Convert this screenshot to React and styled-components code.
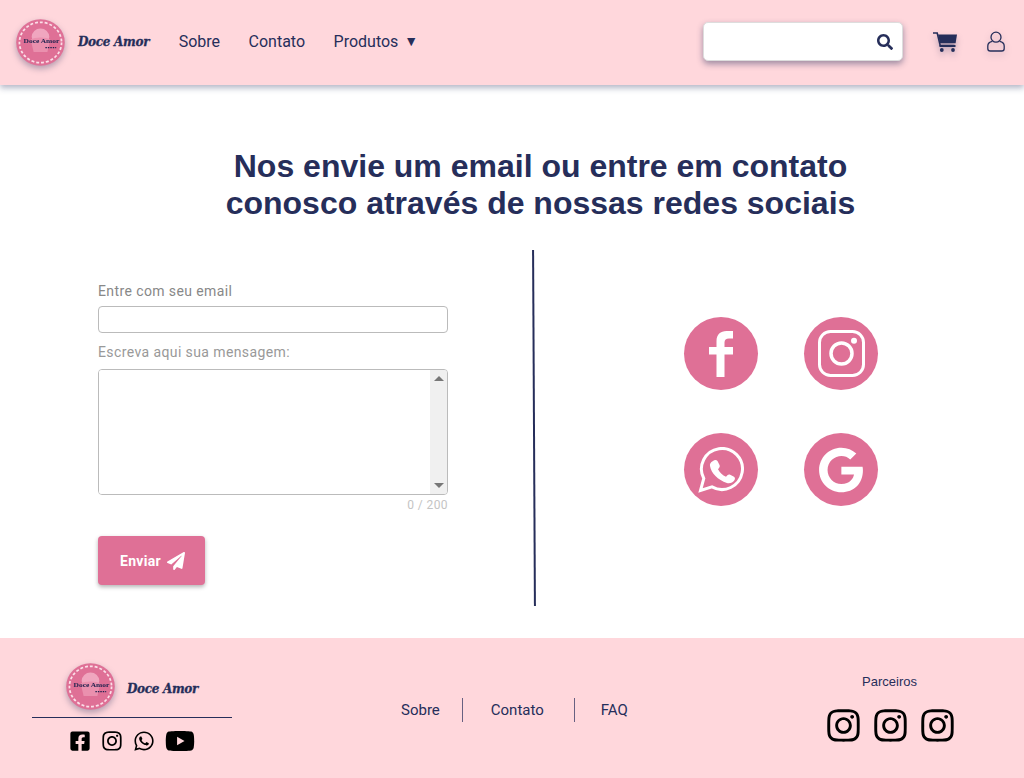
import React from 'react';
import styled, { createGlobalStyle } from 'styled-components';
import { FaSearch, FaPaperPlane, FaInstagram, FaWhatsapp, FaGoogle, FaFacebookSquare, FaYoutube } from 'react-icons/fa';

const navy = '#262e5a';
const rose = '#df7096';
const blush = '#ffd7dc';

const Logo = () => (
  <LogoSvg viewBox="0 0 50 50" width="49" height="47" preserveAspectRatio="none">
    <circle cx="25" cy="25" r="24.8" fill={rose} />
    <circle cx="25" cy="25" r="21.5" fill="none" stroke="#fbdfe8" strokeWidth="1.8" strokeDasharray="3 2" />
    <circle cx="25" cy="19" r="9" fill="#f0a6bf" />
    <path d="M15 22c3-3 17-3 20 0l-3 13H18z" fill="#ea90ae" />
    <text x="26" y="26" textAnchor="middle" fontFamily="Liberation Serif, serif" fontWeight="700" fontSize="7.6" fill="#20234f">
      Doce Amor
    </text>
    <path d="M30 30.5h11" stroke="#20234f" strokeWidth="1.2" strokeDasharray="1.5 1" />
  </LogoSvg>
);

const CartIcon = () => (
  <CartSvg viewBox="0 0 24 20" width="24" height="20">
    <path d="M0 1h4.2l3 12.5h14.3" fill="none" stroke={navy} strokeWidth="1.6" />
    <path d="M5 2.6h19l-1.4 8.6H7z" fill={navy} />
    <rect x="6.5" y="13" width="16" height="2" fill={navy} />
    <circle cx="8.8" cy="18" r="1.9" fill={navy} />
    <circle cx="20" cy="18" r="1.9" fill={navy} />
  </CartSvg>
);

const UserIcon = () => (
  <UserSvg viewBox="0 0 18 21" width="18" height="21" fill="none" stroke={navy} strokeWidth="1.3">
    <circle cx="9" cy="6.2" r="5" />
    <path d="M5.3 10.4C2.4 11 .8 12.6.8 15v2.4c0 1.6 1 2.6 2.6 2.6h11.2c1.6 0 2.6-1 2.6-2.6V15c0-2.4-1.6-4-4.5-4.6" />
  </UserSvg>
);

const FacebookGlyph = () => (
  <svg viewBox="0 0 24 46" width="24" height="46" fill="currentColor">
    <path d="M7.5 46V23.5H0V16h7.5v-6C7.5 3.5 11.5 0 17.5 0H24v7.5h-4c-3 0-4.5 1.5-4.5 4V16H24v7.5h-8.5V46z" />
  </svg>
);

const InstagramGlyph = () => (
  <svg viewBox="0 0 47 47" width="47" height="47" fill="none" stroke="currentColor" strokeWidth="3">
    <rect x="1.5" y="1.5" width="44" height="44" rx="11" />
    <circle cx="23.5" cy="23.5" r="10.5" strokeWidth="3.5" />
    <circle cx="36" cy="10.7" r="3" fill="currentColor" stroke="none" />
  </svg>
);

const WhatsappGlyph = () => (
  <svg viewBox="0 0 46 46" width="46" height="46" fill="none" stroke="currentColor" strokeWidth="3">
    <path d="M2.5 43.5l3.3-12A20.5 20.5 0 1 1 14 39.9z" />
    <path
      d="M15 14c1.5-1.5 3.5-1.5 4.5 0l2 4c.5 1 .3 2-.5 3l-1 1.2c2 3.5 4.5 6 8 7.5l1.4-1.5c.8-.8 1.8-1 2.8-.5l3.8 2c1.2.7 1.2 2.2.4 3.6-1.5 2.4-4.5 3.5-7.5 2.8C20 33 13 26 12 19c-.3-2 .5-3.8 3-5z"
      fill="currentColor"
      stroke="none"
    />
  </svg>
);

const App = () => (
  <Page>
    <GlobalStyle />
    <Header>
      <Logo />
      <Brand>Doce Amor</Brand>
      <Nav>
        <NavLink>Sobre</NavLink>
        <NavLink>Contato</NavLink>
        <NavLink>
          Produtos <Caret>▼</Caret>
        </NavLink>
      </Nav>
      <Search>
        <SearchInput aria-label="Buscar" />
        <FaSearch size={16} color={navy} />
      </Search>
      <CartIcon />
      <UserIcon />
    </Header>

    <Main>
      <Title>
        Nos envie um email ou entre em contato
        <br />
        conosco através de nossas redes sociais
      </Title>
      <Columns>
        <Form onSubmit={e => e.preventDefault()}>
          <Label>Entre com seu email</Label>
          <EmailInput type="text" />
          <Label $light>Escreva aqui sua mensagem:</Label>
          <MessageBox>
            <MessageInput />
            <ScrollTrack>
              <ScrollArrow $up />
              <ScrollArrow />
            </ScrollTrack>
          </MessageBox>
          <Counter>0 / 200</Counter>
          <SendButton type="submit">
            Enviar <FaPaperPlane size={18} />
          </SendButton>
        </Form>
        <Divider />
        <Socials>
          <SocialCircle><FacebookGlyph /></SocialCircle>
          <SocialCircle><InstagramGlyph /></SocialCircle>
          <SocialCircle><WhatsappGlyph /></SocialCircle>
          <SocialCircle><FaGoogle size={46} /></SocialCircle>
        </Socials>
      </Columns>
    </Main>

    <Footer>
      <FooterBrand>
        <FooterLogoRow>
          <Logo />
          <Brand $low>Doce Amor</Brand>
        </FooterLogoRow>
        <FooterIcons>
          <FaFacebookSquare size={22} />
          <FaInstagram size={22} />
          <FaWhatsapp size={22} />
          <FaYoutube size={30} />
        </FooterIcons>
      </FooterBrand>
      <FooterNav>
        <FooterLink>Sobre</FooterLink>
        <FooterLink $bordered>Contato</FooterLink>
        <FooterLink>FAQ</FooterLink>
      </FooterNav>
      <Partners>
        <PartnersTitle>Parceiros</PartnersTitle>
        <PartnerIcons>
          <FaInstagram size={37} />
          <FaInstagram size={37} />
          <FaInstagram size={37} />
        </PartnerIcons>
      </Partners>
    </Footer>
  </Page>
);

const GlobalStyle = createGlobalStyle`
  * {
    box-sizing: border-box;
  }
  body {
    margin: 0;
    background: #fff;
    font-family: Roboto, sans-serif;
    color: ${navy};
  }
`;

const Page = styled.div`
  display: flex;
  flex-direction: column;
  height: 778px;
  overflow: hidden;
`;

const Header = styled.header`
  position: relative;
  z-index: 1;
  display: flex;
  align-items: center;
  flex: 0 0 85px;
  padding: 0 19px 2px 16px;
  background: ${blush};
  box-shadow: 0 3px 6px rgba(37, 45, 92, 0.35);
`;

const LogoSvg = styled.svg`
  flex: none;
  margin-top: 1px;
  filter: drop-shadow(0 3px 3px rgba(37, 45, 92, 0.35));
`;

const CartSvg = styled.svg`
  flex: none;
  margin: 1px 30px 0 30px;
  filter: drop-shadow(0 4px 3px rgba(37, 45, 92, 0.3));
`;

const UserSvg = styled.svg`
  flex: none;
  filter: drop-shadow(0 3px 3px rgba(37, 45, 92, 0.25));
`;

const Brand = styled.span`
  margin: ${p => (p.$low ? '6px' : '1px')} 0 0 ${p => (p.$low ? '12px' : '13px')};
  font-family: 'DejaVu Serif', serif;
  font-size: 12px;
  font-weight: 700;
  font-style: italic;
  letter-spacing: -0.3px;
  white-space: nowrap;
  -webkit-text-stroke: 0.3px ${navy};
`;

const Nav = styled.nav`
  display: flex;
  gap: 28.5px;
  margin-left: 29.5px;
`;

const NavLink = styled.a`
  font-size: 16px;
  color: ${navy};
`;

const Caret = styled.span`
  margin-left: 2px;
  font-size: 14px;
  vertical-align: 1px;
`;

const Search = styled.div`
  display: flex;
  align-items: center;
  width: 200px;
  height: 39px;
  margin-left: auto;
  padding-right: 9px;
  border: 1px solid #ddd;
  border-radius: 5px;
  background: #fff;
  box-shadow: 0 3px 6px rgba(37, 45, 92, 0.45);
`;

const SearchInput = styled.input`
  flex: 1;
  min-width: 0;
  border: none;
  outline: none;
  background: none;
`;

const Main = styled.main`
  flex: 1;
  padding-top: 63px;
`;

const Title = styled.h1`
  margin: 0 0 28px 57px;
  font-family: 'Liberation Sans', Arial, sans-serif;
  font-size: 32px;
  font-weight: 700;
  line-height: 37px;
  text-align: center;
  color: ${navy};
`;

const Columns = styled.div`
  display: flex;
  height: 356px;
`;

const Form = styled.form`
  display: flex;
  flex-direction: column;
  width: 350px;
  margin: 34px 0 0 98px;
`;

const Label = styled.label`
  margin-bottom: ${p => (p.$light ? '8px' : '6px')};
  font-size: 14px;
  line-height: 15px;
  padding-bottom: 1px;
  letter-spacing: 0.4px;
  color: ${p => (p.$light ? '#999' : '#888')};
`;

const EmailInput = styled.input`
  height: 27px;
  margin-bottom: 12px;
  border: 1px solid #bbb;
  border-radius: 4px;
  outline: none;
`;

const MessageBox = styled.div`
  display: flex;
  height: 126px;
  overflow: hidden;
  border: 1px solid #bbb;
  border-radius: 4px;
`;

const MessageInput = styled.textarea`
  flex: 1;
  min-width: 0;
  border: none;
  outline: none;
  resize: none;
`;

const ScrollTrack = styled.div`
  display: flex;
  flex-direction: column;
  align-items: center;
  justify-content: space-between;
  width: 17px;
  padding: 6px 0;
  background: #f0f0f0;
`;

const ScrollArrow = styled.span`
  width: 0;
  height: 0;
  border-left: 5px solid transparent;
  border-right: 5px solid transparent;
  border-${p => (p.$up ? 'bottom' : 'top')}: 5px solid #777;
`;

const Counter = styled.div`
  margin-top: 2px;
  font-size: 12px;
  line-height: 16px;
  letter-spacing: 0.4px;
  text-align: right;
  color: #c4c4c4;
`;

const SendButton = styled.button`
  display: flex;
  align-items: center;
  justify-content: center;
  gap: 6px;
  width: 107px;
  height: 49px;
  margin-top: 23px;
  padding: 0 0 0 2px;
  border: none;
  border-radius: 4px;
  background: ${rose};
  color: #fff;
  font-family: Roboto, sans-serif;
  font-size: 14px;
  font-weight: 700;
  letter-spacing: 0.3px;
  box-shadow: 0 2px 4px rgba(0, 0, 0, 0.3);
`;

const Divider = styled.div`
  flex: none;
  width: 2px;
  height: 356px;
  margin-left: 85px;
  background: ${navy};
  transform: rotate(-0.3deg);
`;

const Socials = styled.div`
  display: grid;
  grid-template-columns: 74px 74px;
  grid-auto-rows: 73px;
  gap: 43px 46px;
  margin: 67px 0 0 149px;
`;

const SocialCircle = styled.a`
  display: flex;
  align-items: center;
  justify-content: center;
  border-radius: 50%;
  background: ${rose};
  color: #fff;
`;

const Footer = styled.footer`
  display: flex;
  flex: 0 0 140px;
  background: ${blush};
`;

const FooterBrand = styled.div`
  width: 200px;
  margin: 23px 0 0 32px;
`;

const FooterLogoRow = styled.div`
  display: flex;
  align-items: center;
  justify-content: center;
  height: 57px;
  padding-bottom: 7px;
  border-bottom: 1px solid ${navy};
`;

const FooterIcons = styled.div`
  display: flex;
  align-items: center;
  justify-content: center;
  gap: 10px;
  margin-top: 8px;
  color: #000;
`;

const FooterNav = styled.nav`
  display: flex;
  align-items: center;
  align-self: flex-start;
  margin: 60px 0 0 169px;
`;

const FooterLink = styled.a`
  display: flex;
  align-items: center;
  height: 24px;
  padding: ${p => (p.$bordered ? '0 30px 0 28px' : '0 22px 0 0')};
  margin-right: ${p => (p.$bordered ? '26px' : '0')};
  border-left: ${p => (p.$bordered ? '1px solid rgba(38, 46, 90, 0.7)' : 'none')};
  border-right: ${p => (p.$bordered ? '1px solid rgba(38, 46, 90, 0.7)' : 'none')};
  font-size: 15px;
  color: ${navy};
`;

const Partners = styled.div`
  display: flex;
  flex-direction: column;
  align-items: center;
  margin: 36px 0 0 auto;
  padding-right: 68px;
`;

const PartnersTitle = styled.div`
  margin: 0 2px 17px 0;
  font-family: 'Liberation Sans', Arial, sans-serif;
  font-size: 13px;
  line-height: 16px;
`;

const PartnerIcons = styled.div`
  display: flex;
  gap: 10px;
  color: #000;
`;

export default App;
